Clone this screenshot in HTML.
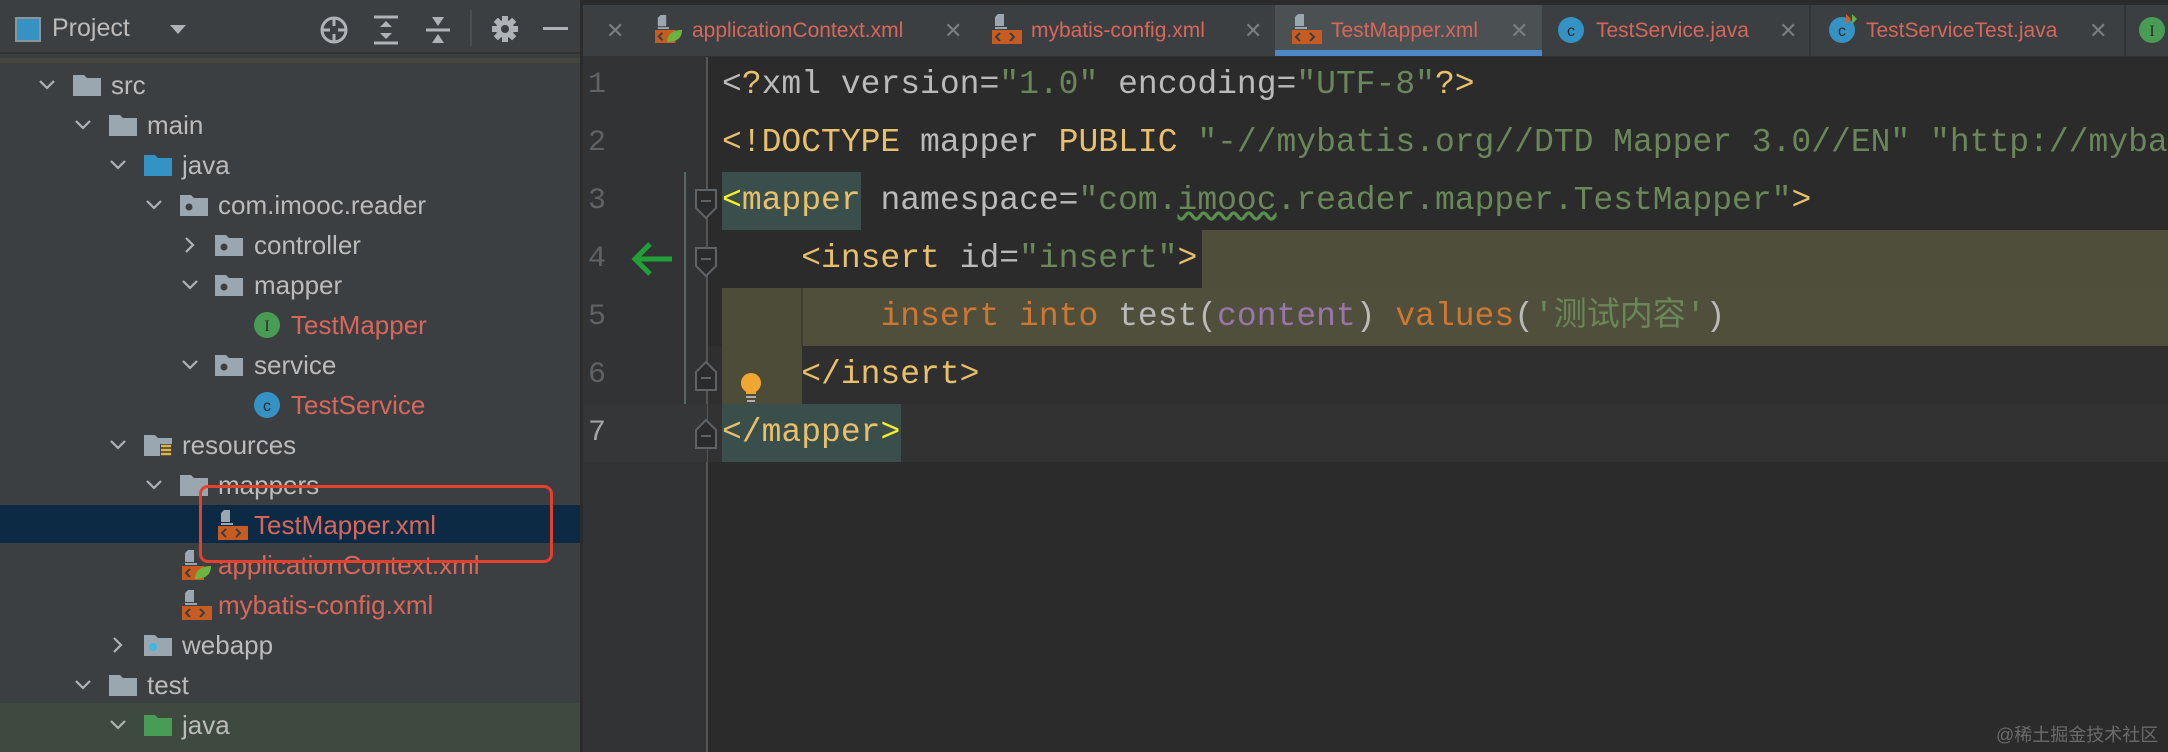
<!DOCTYPE html>
<html><head><meta charset="utf-8"><style>
*{margin:0;padding:0;box-sizing:border-box}
body{width:2168px;height:752px;overflow:hidden;background:#2b2b2b;position:relative;font-family:"Liberation Sans","Noto Sans CJK SC",sans-serif}
.abs{position:absolute}
#side{left:0;top:0;width:582px;height:752px;background:#3c3f41}
.row{position:absolute;left:0;width:582px;height:40px;font-size:26px;line-height:40px;color:#bbbbbb;white-space:nowrap}
.row .ch{position:absolute;top:0;width:20px;height:40px}
.row .ic{position:absolute;top:9px}
.row .tx{position:absolute;top:0}
.red{color:#d7675a}
#clip{position:absolute;left:0;top:0;width:2168px;height:752px;overflow:hidden}
.code{position:absolute;left:722px;height:58px;line-height:58px;font-family:"Liberation Mono","Noto Sans CJK SC",monospace;font-size:33px;white-space:pre;color:#bababa}
.ln{position:absolute;left:588px;width:30px;height:58px;line-height:58px;font-family:"Liberation Mono",monospace;font-size:30px;color:#606366}
.t{color:#e8bf6a}.s{color:#6a8759}.k{color:#cc7832}.p{color:#9876aa}.y{color:#ffef28}
.tab{position:absolute;top:5px;height:51px;font-size:21px;line-height:51px;color:#d7675a;white-space:nowrap}
.x{position:absolute;top:5px;height:51px;line-height:51px;color:#7a7e80;font-size:22px}
</style></head><body>

<div id="side" class="abs">
  <div class="abs" style="left:0;top:0;width:582px;height:54px;background:#3c3f41;border-bottom:2px solid #323232"></div>
  <div class="abs" style="left:15px;top:17px;width:26px;height:25px;border:2px solid #8c9499;background:#3592c4"></div>
  <div class="abs" style="left:52px;top:8px;font-size:25px;line-height:40px;color:#bbbbbb">Project</div>
  <svg class="abs" style="left:168px;top:22px" width="20" height="14"><path d="M2 3h16l-8 9z" fill="#aeb3b7"/></svg>
  <svg class="abs" style="left:318px;top:14px" width="32" height="32"><circle cx="16" cy="16" r="12" fill="none" stroke="#aeb3b7" stroke-width="3"/><path d="M16 4v8M16 20v8M4 16h8M20 16h8" stroke="#aeb3b7" stroke-width="3"/></svg>
  <svg class="abs" style="left:372px;top:14px" width="28" height="32"><path d="M2 3h24M2 29h24" stroke="#aeb3b7" stroke-width="3"/><path d="M14 7l-6 6h12zM14 25l-6-6h12z" fill="#aeb3b7"/></svg>
  <svg class="abs" style="left:424px;top:14px" width="28" height="32"><path d="M2 16h24" stroke="#aeb3b7" stroke-width="3"/><path d="M8 3l6 9 6-9zM8 29l6-9 6 9z" fill="#aeb3b7"/></svg>
  <div class="abs" style="left:470px;top:10px;width:2px;height:36px;background:#4b4e50"></div>
  <svg class="abs" style="left:491px;top:15px" width="28" height="28" viewBox="0 0 28 28"><g fill="#aeb3b7"><circle cx="14" cy="14" r="9"/><rect x="11" y="1" width="6" height="26"/><rect x="1" y="11" width="26" height="6"/><rect x="11" y="1" width="6" height="26" transform="rotate(45 14 14)"/><rect x="11" y="1" width="6" height="26" transform="rotate(-45 14 14)"/></g><circle cx="14" cy="14" r="4" fill="#3c3f41"/></svg>
  <div class="abs" style="left:543px;top:27px;width:25px;height:3px;background:#aeb3b7"></div>
  <div class="abs" style="left:0;top:58px;width:582px;height:5px;background:#47463d"></div>
  <div class="abs" style="left:0;top:505px;width:582px;height:38px;background:#0d2a45"></div>
  <div class="abs" style="left:0;top:703px;width:582px;height:49px;background:#3e4a3f"></div>
</div>
<div class="abs" style="left:580px;top:0;width:3px;height:752px;background:#2b2b2b"></div>

<svg width="0" height="0" style="position:absolute"><defs>
<symbol id="fold" viewBox="0 0 28 22"><path d="M0 1h11l3 3h14v18H0z" fill="#9aa7b0"/></symbol>
<symbol id="pkg" viewBox="0 0 28 22"><path d="M0 1h11l3 3h14v18H0z" fill="#9aa7b0"/><circle cx="9" cy="13" r="3.5" fill="#3c3f41"/></symbol>
<symbol id="jfold" viewBox="0 0 28 22"><path d="M0 1h11l3 3h14v18H0z" fill="#3592c4"/></symbol>
<symbol id="gfold" viewBox="0 0 28 22"><path d="M0 1h11l3 3h14v18H0z" fill="#499c54"/></symbol>
<symbol id="rfold" viewBox="0 0 28 22"><path d="M0 1h11l3 3h14v18H0z" fill="#9aa7b0"/><path d="M16 10h12v12H16z" fill="#3c3f41"/><path d="M17 12h10M17 16h10M17 20h10" stroke="#e0b640" stroke-width="2.5"/></symbol>
<symbol id="wfold" viewBox="0 0 28 22"><path d="M0 1h11l3 3h14v18H0z" fill="#9aa7b0"/><circle cx="9" cy="13" r="4" fill="#40b6e0"/></symbol>
<symbol id="xml" viewBox="0 0 30 30"><path d="M6 0h6v12H3V3z" fill="#9aa7b0"/><path d="M3 13h12v2H3z" fill="#9aa7b0"/><rect x="0" y="16" width="30" height="14" fill="#c75c23"/><path d="M8 19l-4 4 4 4M18 19l4 4-4 4" stroke="#3c3f41" stroke-width="2" fill="none"/></symbol>
<symbol id="xmls" viewBox="0 0 30 30"><path d="M6 0h6v12H3V3z" fill="#9aa7b0"/><path d="M3 13h12v2H3z" fill="#9aa7b0"/><rect x="0" y="16" width="22" height="14" fill="#c75c23"/><path d="M8 19l-4 4 4 4" stroke="#3c3f41" stroke-width="2" fill="none"/><path d="M13 29c0-8 6-13 16-13 0 9-6 13-16 13z" fill="#6db33f"/></symbol>
<symbol id="chv" viewBox="0 0 20 40"><path d="M3 16l7 7 7-7" stroke="#aeb3b7" stroke-width="2.2" fill="none"/></symbol>
<symbol id="chr" viewBox="0 0 20 40"><path d="M6 13l7 7-7 7" stroke="#aeb3b7" stroke-width="2.2" fill="none"/></symbol>
</defs></svg>

<div class="row" style="top:65px"><svg class="ch" style="left:37px"><use href="#chv"/></svg><svg class="ic" style="left:73px" width="28" height="22"><use href="#fold"/></svg><span class="tx" style="left:111px">src</span></div>
<div class="row" style="top:105px"><svg class="ch" style="left:73px"><use href="#chv"/></svg><svg class="ic" style="left:109px" width="28" height="22"><use href="#fold"/></svg><span class="tx" style="left:147px">main</span></div>
<div class="row" style="top:145px"><svg class="ch" style="left:108px"><use href="#chv"/></svg><svg class="ic" style="left:144px" width="28" height="22"><use href="#jfold"/></svg><span class="tx" style="left:182px">java</span></div>
<div class="row" style="top:185px"><svg class="ch" style="left:144px"><use href="#chv"/></svg><svg class="ic" style="left:180px" width="28" height="22"><use href="#pkg"/></svg><span class="tx" style="left:218px">com.imooc.reader</span></div>
<div class="row" style="top:225px"><svg class="ch" style="left:180px"><use href="#chr"/></svg><svg class="ic" style="left:215px" width="28" height="22"><use href="#pkg"/></svg><span class="tx" style="left:254px">controller</span></div>
<div class="row" style="top:265px"><svg class="ch" style="left:180px"><use href="#chv"/></svg><svg class="ic" style="left:215px" width="28" height="22"><use href="#pkg"/></svg><span class="tx" style="left:254px">mapper</span></div>
<div class="row" style="top:305px"><svg class="ic" style="left:253px;top:6px" width="28" height="28"><circle cx="14" cy="14" r="13" fill="#499c54"/><text x="14" y="20" font-family="Liberation Serif" font-size="16" text-anchor="middle" fill="#2b2b2b">I</text></svg><span class="tx red" style="left:291px">TestMapper</span></div>
<div class="row" style="top:345px"><svg class="ch" style="left:180px"><use href="#chv"/></svg><svg class="ic" style="left:215px" width="28" height="22"><use href="#pkg"/></svg><span class="tx" style="left:254px">service</span></div>
<div class="row" style="top:385px"><svg class="ic" style="left:253px;top:6px" width="28" height="28"><circle cx="14" cy="14" r="13" fill="#3592c4"/><text x="14" y="20" font-family="Liberation Sans" font-size="16" text-anchor="middle" fill="#2b2b2b">c</text></svg><span class="tx red" style="left:291px">TestService</span></div>
<div class="row" style="top:425px"><svg class="ch" style="left:108px"><use href="#chv"/></svg><svg class="ic" style="left:144px" width="28" height="22"><use href="#rfold"/></svg><span class="tx" style="left:182px">resources</span></div>
<div class="row" style="top:465px"><svg class="ch" style="left:144px"><use href="#chv"/></svg><svg class="ic" style="left:180px" width="28" height="22"><use href="#fold"/></svg><span class="tx" style="left:218px">mappers</span></div>
<div class="row" style="top:505px"><svg class="ic" style="left:218px;top:5px" width="30" height="30"><use href="#xml"/></svg><span class="tx red" style="left:254px">TestMapper.xml</span></div>
<div class="row" style="top:545px"><svg class="ic" style="left:182px;top:5px" width="30" height="30"><use href="#xmls"/></svg><span class="tx red" style="left:218px">applicationContext.xml</span></div>
<div class="row" style="top:585px"><svg class="ic" style="left:182px;top:5px" width="30" height="30"><use href="#xml"/></svg><span class="tx red" style="left:218px">mybatis-config.xml</span></div>
<div class="row" style="top:625px"><svg class="ch" style="left:108px"><use href="#chr"/></svg><svg class="ic" style="left:144px" width="28" height="22"><use href="#wfold"/></svg><span class="tx" style="left:182px">webapp</span></div>
<div class="row" style="top:665px"><svg class="ch" style="left:73px"><use href="#chv"/></svg><svg class="ic" style="left:109px" width="28" height="22"><use href="#fold"/></svg><span class="tx" style="left:147px">test</span></div>
<div class="row" style="top:705px"><svg class="ch" style="left:108px"><use href="#chv"/></svg><svg class="ic" style="left:144px" width="28" height="22"><use href="#gfold"/></svg><span class="tx" style="left:182px">java</span></div>

<div class="abs" style="left:199px;top:485px;width:354px;height:78px;border:3.5px solid #e5402c;border-radius:9px"></div>

<div class="abs" style="left:583px;top:0;width:1585px;height:5px;background:#2b2b2b"></div>
<div class="abs" style="left:583px;top:5px;width:1585px;height:51px;background:#3c3f41"></div>
<div class="abs" style="left:583px;top:56px;width:1585px;height:1px;background:#323232"></div>
<div class="abs" style="left:1275px;top:5px;width:267px;height:51px;background:#4b5052"></div>
<div class="abs" style="left:1275px;top:50px;width:267px;height:6px;background:#4a88c7"></div>
<div class="abs" style="left:1809px;top:5px;width:2px;height:51px;background:#333"></div>
<div class="abs" style="left:2124px;top:5px;width:2px;height:51px;background:#333"></div>
<div class="x" style="left:606px">✕</div>
<svg class="abs" style="left:655px;top:14px" width="28" height="30"><use href="#xmls"/></svg>
<div class="tab" style="left:692px">applicationContext.xml</div>
<div class="x" style="left:944px">✕</div>
<svg class="abs" style="left:992px;top:14px" width="30" height="30"><use href="#xml"/></svg>
<div class="tab" style="left:1031px">mybatis-config.xml</div>
<div class="x" style="left:1244px">✕</div>
<svg class="abs" style="left:1292px;top:14px" width="30" height="30"><use href="#xml"/></svg>
<div class="tab" style="left:1331px">TestMapper.xml</div>
<div class="x" style="left:1510px">✕</div>
<svg class="abs" style="left:1557px;top:16px" width="28" height="28"><circle cx="14" cy="14" r="13" fill="#3592c4"/><text x="14" y="20" font-family="Liberation Sans" font-size="16" text-anchor="middle" fill="#2b2b2b">c</text></svg>
<div class="tab" style="left:1596px">TestService.java</div>
<div class="x" style="left:1779px">✕</div>
<svg class="abs" style="left:1828px;top:12px" width="30" height="32"><circle cx="14" cy="18" r="13" fill="#3592c4"/><text x="14" y="24" font-family="Liberation Sans" font-size="16" text-anchor="middle" fill="#2b2b2b">c</text><path d="M18 2l5 5-5 5z" fill="#d75c2a"/><path d="M24 2l5 5-5 5z" fill="#62b543"/></svg>
<div class="tab" style="left:1866px">TestServiceTest.java</div>
<div class="x" style="left:2089px">✕</div>
<svg class="abs" style="left:2138px;top:16px" width="28" height="28"><circle cx="14" cy="14" r="13" fill="#499c54"/><text x="14" y="20" font-family="Liberation Serif" font-size="16" text-anchor="middle" fill="#2b2b2b">I</text></svg>

<div class="abs" style="left:583px;top:57px;width:124px;height:695px;background:#313335"></div>
<div class="abs" style="left:706px;top:57px;width:2px;height:695px;background:#555555"></div>
<div class="abs" style="left:684px;top:172px;width:2px;height:290px;background:#4f6b66"></div>
<div class="abs" style="left:583px;top:404px;width:124px;height:58px;background:#343638"></div>

<div class="abs" style="left:708px;top:346px;width:1460px;height:58px;background:#2f2f2f"></div>
<div class="abs" style="left:708px;top:404px;width:1460px;height:58px;background:#323232"></div>
<div class="abs" style="left:722px;top:172px;width:139px;height:58px;background:#3a4f4b"></div>
<div class="abs" style="left:1202px;top:230px;width:966px;height:58px;background:#4f4e3a"></div>
<div class="abs" style="left:722px;top:288px;width:1446px;height:58px;background:#504f3b"></div>
<div class="abs" style="left:722px;top:288px;width:80px;height:116px;background:#4d4c39"></div>
<div class="abs" style="left:801px;top:288px;width:2px;height:58px;background:#3e3d30"></div>
<div class="abs" style="left:722px;top:404px;width:179px;height:58px;background:#3a4f4b"></div>

<div class="ln" style="top:56px">1</div>
<div class="ln" style="top:114px">2</div>
<div class="ln" style="top:172px">3</div>
<div class="ln" style="top:230px">4</div>
<div class="ln" style="top:288px">5</div>
<div class="ln" style="top:346px">6</div>
<div class="ln" style="top:404px;color:#a4a3a3">7</div>

<svg class="abs" style="left:628px;top:238px" width="48" height="42"><path d="M44 21H8M22 6L7 21l15 15" stroke="#21a038" stroke-width="5" fill="none"/></svg>
<svg class="abs" style="left:694px;top:188px" width="26" height="34"><path d="M2 2h20v18l-10 10-10-10z" fill="#2b2b2b" stroke="#606366" stroke-width="2"/><path d="M7 13h10" stroke="#606366" stroke-width="2"/></svg>
<svg class="abs" style="left:694px;top:246px" width="26" height="34"><path d="M2 2h20v18l-10 10-10-10z" fill="#2b2b2b" stroke="#606366" stroke-width="2"/><path d="M7 13h10" stroke="#606366" stroke-width="2"/></svg>
<svg class="abs" style="left:694px;top:358px" width="26" height="34"><path d="M2 32h20V14L12 4 2 14z" fill="#2b2b2b" stroke="#606366" stroke-width="2"/><path d="M7 20h10" stroke="#606366" stroke-width="2"/></svg>
<svg class="abs" style="left:694px;top:416px" width="26" height="34"><path d="M2 32h20V14L12 4 2 14z" fill="#2b2b2b" stroke="#606366" stroke-width="2"/><path d="M7 20h10" stroke="#606366" stroke-width="2"/></svg>
<svg class="abs" style="left:739px;top:372px" width="24" height="32"><circle cx="12" cy="11" r="10" fill="#f0a732"/><rect x="7" y="16" width="10" height="6" fill="#f0a732"/><path d="M7 25h10M8 29h8" stroke="#afb1b3" stroke-width="2"/></svg>

<div id="clip">
<div class="code" style="top:56px">&lt;<span class="t">?</span>xml version=<span class="s">"1.0"</span> encoding=<span class="s">"UTF-8"</span><span class="t">?&gt;</span></div>
<div class="code" style="top:114px"><span class="t">&lt;!DOCTYPE</span> mapper <span class="t">PUBLIC</span> <span class="s">"-//mybatis.org//DTD Mapper 3.0//EN" "http://myba</span></div>
<div class="code" style="top:172px"><span class="y">&lt;</span><span class="t">mapper</span> namespace=<span class="s">"com.<span style="text-decoration:underline wavy #5a8f4e">imooc</span>.reader.mapper.TestMapper"</span><span class="t">&gt;</span></div>
<div class="code" style="top:230px">    <span class="t">&lt;insert</span> id=<span class="s">"insert"</span><span class="t">&gt;</span></div>
<div class="code" style="top:288px">        <span class="k">insert into</span> test(<span class="p">content</span>) <span class="k">values</span>(<span class="s">'测试内容'</span>)</div>
<div class="code" style="top:346px">    <span class="t">&lt;/insert&gt;</span></div>
<div class="code" style="top:404px"><span class="t">&lt;/mapper</span><span class="y">&gt;</span></div>
</div>

<div class="abs" style="left:1996px;top:722px;font-size:18px;line-height:26px;color:#6b6b6b;white-space:nowrap;font-family:'Liberation Sans','Noto Sans CJK SC',sans-serif">@稀土掘金技术社区</div>
</body></html>
